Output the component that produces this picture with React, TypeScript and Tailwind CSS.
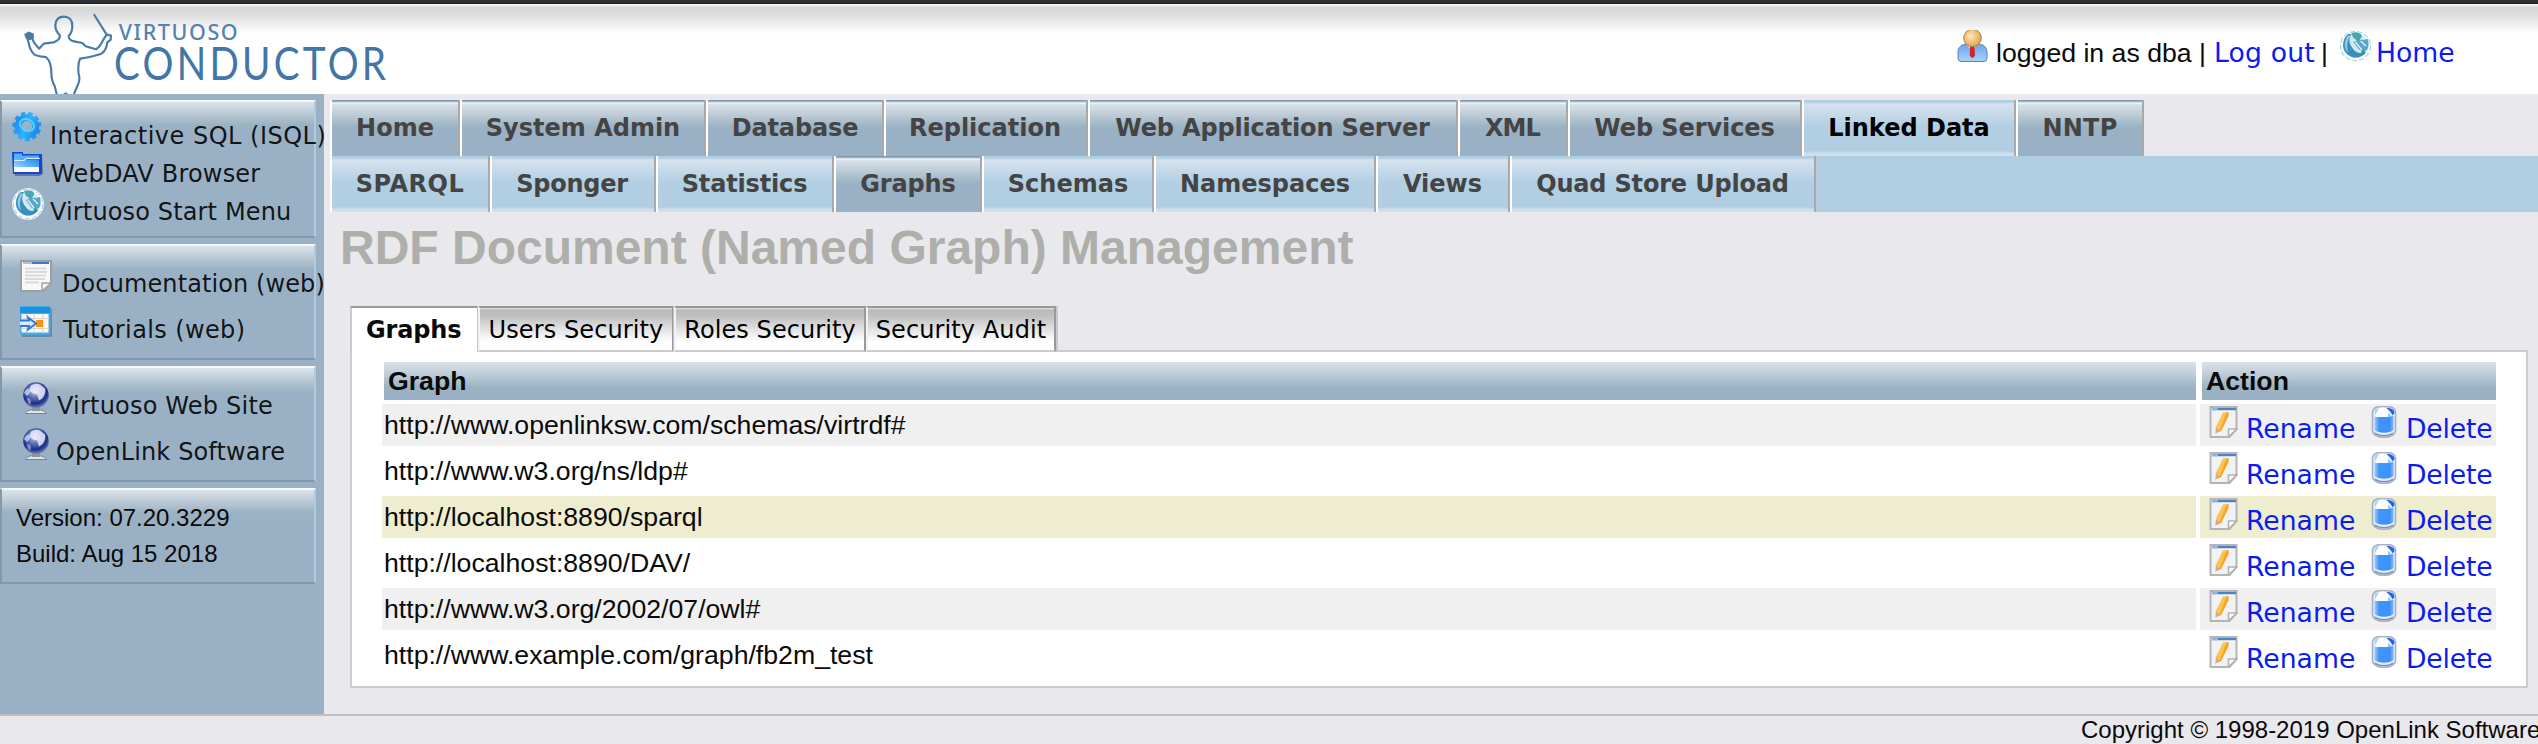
import type { ReactNode } from "react";

const verdana = "font-['DejaVu_Sans',sans-serif]";
const arial = "font-['Liberation_Sans',sans-serif]";

function Logo() {
  return (
    <svg className="block h-[94px] w-[420px] shrink-0" viewBox="0 0 1260 282" fill="none">
      <g stroke="#4a7aa8" strokeWidth="6.5" strokeLinejoin="round" strokeLinecap="round">
        <path d="M92 108 C100 116 97 122 104 130 L117 146 L131 131 L160 127 C172 124 180 116 180 106 C170 98 166 90 166 76 C167 58 178 50 192 50 C207 50 217 60 217 78 C217 92 214 100 206 108 C206 118 213 122 222 124 L247 129 L257 139 L288 148 C300 142 306 126 312 116 L320 104 L283 45" />
        <path d="M320 104 L333 107 L332 119 L322 127 C320 142 316 154 304 161 C286 168 262 172 240 176 C235 188 234 208 236 222 C242 240 236 250 232 258 L222 282" />
        <path d="M79 106 L86 128 C88 142 94 156 104 164 C114 170 128 170 138 171 C152 184 153 200 154 218 C154 234 158 248 164 258 L170 282" />
        <path d="M76 104 L86 98 L98 103 L99 112 L90 117 L80 113 Z" fill="#4a7aa8" />
        <path d="M192 282 L197 279 L202 282" strokeWidth="4" />
      </g>
      <text x="356" y="121" textLength="362" lengthAdjust="spacingAndGlyphs" letterSpacing="5" fontSize="67" fontWeight="500" fontFamily="'Noto Sans', sans-serif" fill="#5583ae">VIRTUOSO</text>
      <text x="342" y="241" textLength="826" lengthAdjust="spacingAndGlyphs" letterSpacing="12" fontSize="142" fontFamily="Lato, sans-serif" fill="#4176a6">CONDUCTOR</text>
    </svg>
  );
}

function GearIcon() {
  return (
    <svg className="h-8 w-8" viewBox="0 0 32 32" fill="none">
      <defs>
        <linearGradient id="gear" x1="0" y1="0" x2="1" y2="1">
          <stop offset="0" stopColor="#1d8cf0" />
          <stop offset=".5" stopColor="#2fb4ff" />
          <stop offset="1" stopColor="#1a86e6" />
        </linearGradient>
      </defs>
      <ellipse cx="15" cy="14.5" rx="12.7" ry="13" stroke="url(#gear)" strokeWidth="3.4" strokeDasharray="4.3 3.05" transform="rotate(-20 15 15)" />
      <ellipse cx="15" cy="14.5" rx="8.8" ry="8.8" stroke="url(#gear)" strokeWidth="7" transform="rotate(-20 15 15)" />
      <ellipse cx="15" cy="13" rx="7.4" ry="5.6" stroke="#5cd0fb" strokeWidth="1.8" transform="rotate(25 15 13)" />
    </svg>
  );
}

function FolderIcon() {
  return (
    <svg className="h-8 w-8" viewBox="0 0 32 32">
      <defs>
        <linearGradient id="folder" x1="0" y1="1" x2="1" y2="0">
          <stop offset="0" stopColor="#dff2ff" />
          <stop offset=".35" stopColor="#7cc4fb" />
          <stop offset="1" stopColor="#1e86ee" />
        </linearGradient>
      </defs>
      <path d="M2 7h28l1 19-3 2H3z" fill="#3c4f86" opacity=".6" />
      <path d="M0 4h11v2h19v19l-1 1H1z" fill="#1646d2" />
      <path d="M2 5.500h8v2h17v4H2z" fill="#4fb0f7" />
      <path d="M2 10h9l2 2h14v12H2z" fill="url(#folder)" />
      <path d="M2 19h25v5H2z" fill="#fff" />
      <path d="M2 12.500h10l2-2h14" stroke="#d6edff" strokeWidth="1.200" fill="none" />
    </svg>
  );
}

function SwirlGlobe({ className }: { className: string }) {
  return (
    <svg className={className} viewBox="0 0 32 32" preserveAspectRatio="none">
      <circle cx="16" cy="16" r="15.8" fill="#fff" />
      <circle cx="16" cy="15.5" r="12.5" fill="#cfe8f1" />
      <circle cx="16" cy="16" r="14.6" fill="none" stroke="#a9d5e6" strokeWidth="1.200" strokeDasharray="5 2" />
      <path d="M9 4C4 8 3 15 5 20c3 6 9 9 15 7 3-1 5-3 6-5-6 2-10 1-13-4C10 14 9 9 12 4z" fill="#3a8fbd" />
      <path d="M9 5c-4 6-5 12 0 18-2-7-1-12 2-17z" fill="#8fcbe3" />
      <path d="M12 3c5-2 9 0 11 3-2 2-3 3-3 5-2 1-3 0-4-2-2 0-3-3-4-6z" fill="#43aab0" />
      <path d="M14 12l6-2 8-1c1 5 1 8-1 11-3 2-6 1-8-1z" fill="#58a6cc" />
      <path d="M16 12l6 8M22 5l3 5M21 11l5 5" stroke="#e2f3f9" strokeWidth="1.300" />
      <circle cx="23.500" cy="22.500" r="2" fill="#2b9c9a" />
    </svg>
  );
}

function DocumentIcon() {
  return (
    <svg className="h-8 w-8" viewBox="0 0 32 32">
      <path d="M1 1h30v23l-8 7H1z" fill="#f8f8f8" stroke="#9c9fa1" strokeWidth="2" />
      <path d="M3 2h26v2H3z" fill="#3f76c8" />
      <path d="M3 2h9v2H3z" fill="#a9c3e8" />
      <path d="M5 8.500h21M5 12h22M5 15.500h21M5 19h20M5 22.500h14" stroke="#d8d9da" strokeWidth="2" />
      <path d="M22 31v-8h9z" fill="#f7f7f7" stroke="#a1a4a6" strokeWidth="1.500" />
    </svg>
  );
}

function TutorialIcon() {
  return (
    <svg className="h-8 w-8" viewBox="0 0 32 32">
      <rect x="1.500" y="2" width="30.500" height="29" rx="1.500" fill="#4d7a9c" opacity=".7" />
      <rect x="0" y="0" width="30.500" height="29" rx="1.500" fill="#49a9e6" />
      <path d="M0 1h30v6H0z" fill="#1b90de" />
      <path d="M1.500 8h27v18.500h-27z" fill="#fbf7f2" />
      <path d="M1 12.500h28M1 22.500h28M7 8v19M14 8v19M23 8v19" stroke="#dcd3cd" strokeWidth="1" />
      <rect x="16" y="14" width="7" height="7" fill="#f79418" />
      <path d="M0 14.500h9l-1-3 8 6-8 6 1-3.500H0" fill="#dcebfc" stroke="#2b7ce0" strokeWidth="2" />
    </svg>
  );
}

function StandGlobe() {
  return (
    <svg className="h-8 w-[28px]" viewBox="0 0 28 32">
      <defs>
        <radialGradient id="ball" cx=".45" cy=".35" r=".65">
          <stop offset="0" stopColor="#c3cbea" />
          <stop offset=".4" stopColor="#5f70b6" />
          <stop offset=".75" stopColor="#1c2e88" />
          <stop offset="1" stopColor="#7380b6" />
        </radialGradient>
      </defs>
      <path d="M3.500 31.500c1-3 5-4 10-4s9.500 1 11 4z" fill="#e3e4e8" stroke="#76808e" strokeWidth="1" />
      <path d="M10 25h8v4h-8z" fill="#8d93a3" />
      <circle cx="14" cy="13" r="12.800" fill="url(#ball)" />
      <path d="M9 3.500c3-2 7-2 9-1l5 4c1 4-1 8-3 10l-3 2-2-6-4-1-4-3z" fill="#f1f3fc" opacity=".8" />
      <path d="M2 11c1-3 3-4 5-5l1 5-3 3z" fill="#dfe4f6" opacity=".7" />
      <path d="M5 16c3 0 4 2 4 4l-1 3c-2-2-3-4-3-7z" fill="#d6dcf2" opacity=".5" />
    </svg>
  );
}

function UserIcon() {
  return (
    <svg className="h-8 w-[31px]" viewBox="0 0 31 32">
      <defs>
        <radialGradient id="face" cx=".4" cy=".4" r=".65">
          <stop offset="0" stopColor="#ffe7bb" />
          <stop offset="1" stopColor="#dda347" />
        </radialGradient>
        <linearGradient id="shirt" x1="0" y1="0" x2="0" y2="1">
          <stop offset="0" stopColor="#6aa3ee" />
          <stop offset="1" stopColor="#a9d3ff" />
        </linearGradient>
      </defs>
      <path d="M1 28v-6c0-5 4-8 9-8h11c5 0 9 3 9 8v6q0 3.500-3 3.500H4Q1 31.500 1 28z" fill="url(#shirt)" stroke="#5b83ba" strokeWidth="1" />
      <path d="M10 15l5 6 5-6z" fill="#fff" />
      <path d="M13 16h4.500l.5 10-2.500 2-2.700-2z" fill="#cf2433" />
      <circle cx="15.500" cy="8" r="8.800" fill="url(#face)" stroke="#a97d3a" strokeWidth="1" />
    </svg>
  );
}

function RenameIcon() {
  return (
    <svg className="h-8 w-[29px]" viewBox="0 0 29 32">
      <path d="M1.500 1h26v22l-7 8H1.500z" fill="#f1f2f3" stroke="#b2b4b6" strokeWidth="2" />
      <path d="M3 2h24v2.200H3z" fill="#4a81c9" />
      <path d="M3 2h6v2.200H3z" fill="#93b3de" />
      <path d="M14 6.500l5-.5.500 4-7.500 15-5.500 2.500.5-7z" fill="#fbc352" />
      <path d="M17.500 6.500l2-.5v4L12 25l-2 1z" fill="#f5a52a" />
      <path d="M7 21.500l4.500 3.500-5 2.500z" fill="#d7a98a" />
      <path d="M19.500 31v-8h8z" fill="#fff" stroke="#b0b2b4" strokeWidth="1.600" />
    </svg>
  );
}

function DeleteIcon() {
  return (
    <svg className="h-8 w-[26px]" viewBox="0 0 26 32">
      <defs>
        <linearGradient id="bin" x1="0" y1="0" x2="1" y2="0">
          <stop offset="0" stopColor="#9fcbf8" />
          <stop offset=".25" stopColor="#3f95fa" />
          <stop offset=".8" stopColor="#3b92fb" />
          <stop offset="1" stopColor="#86b7ee" />
        </linearGradient>
      </defs>
      <path d="M1.500 6C2 2 6 .8 9 .8h8c4 0 7 2 7.500 5.200v19c-1 5-6 6.200-11.500 6.200S2.500 30 1.500 25z" fill="#e6eefa" stroke="#a4afc3" strokeWidth="1.600" />
      <path d="M3.500 10h19v14c-4 3.500-15 3.500-19 0z" fill="url(#bin)" />
      <path d="M3.500 5C4 3 6 2 8 2L4 9z" fill="#a8d0f6" />
      <path d="M8 2c4-1 9 0 9 1l1 8H4z" fill="#fcfdff" />
      <path d="M15.500 2c5 0 8 1.500 8 5l-2 2.500c-1-3-3-4.500-6-7.500z" fill="#1d62f0" />
      <path d="M17 7l4 4h-4z" fill="#8fc2fd" />
      <path d="M4 27c4 3.500 14 3.500 18 0" stroke="#7f8da9" strokeWidth="1.200" fill="none" />
    </svg>
  );
}

function Box({ className, children }: { className: string; children: ReactNode }) {
  return (
    <div className={`w-[316px] shrink-0 border-2 border-t-[#f6f8fa] border-r-[#aecbe2] border-b-[#8398aa] border-l-[#8398aa] bg-[linear-gradient(#dbe4eb_0px,#bfccd8_10px,#9bb2c3_23px,#9ab1c5_30px)] ${className}`}>
      {children}
    </div>
  );
}

function SideLink({ icon, label, row, slot, track }: { icon: ReactNode; label: string; row: string; slot: string; track: string }) {
  return (
    <div className={`flex items-start ${row}`}>
      <span className={`shrink-0 ${slot}`}>{icon}</span>
      <span className={`whitespace-nowrap text-2xl/[inherit] text-black/90 ${track}`}>{label}</span>
    </div>
  );
}

const darkTab = "bg-[linear-gradient(#809bb0_0px,#809bb0_1px,#bccad6_2px,#f1f5f8_3px,#d6dfe7_5px,#bdcbd6_15px,#9bb3c4_27px,#9ab0c4_32px)] text-[#444]";
const lightTab = "bg-[linear-gradient(#b1cee3_0px,#b1cee3_2px,#d5e3ef_4px,#c7daea_14px,#b2cfe4_26px,#b0cde2_51px,#c1d7e7_52px,#d0e0ec_54px)] text-[#444]";
const activeTop = "bg-[linear-gradient(#b1cee3_0px,#b1cee3_2px,#d5e3ef_4px,#c7daea_14px,#b2cfe4_26px,#b0cde2_51px,#c1d7e7_52px,#d0e0ec_54px)] text-black";

const mainTabs = [
  ["Home", "w-[130px]", darkTab],
  ["System Admin", "w-[246px]", darkTab],
  ["Database", "w-[178px] tracking-[-0.15px]", darkTab],
  ["Replication", "w-[204px] pr-[2px]", darkTab],
  ["Web Application Server", "w-[370px] pr-px tracking-[-0.16px]", darkTab],
  ["XML", "w-[110px] pr-px tracking-[-0.9px]", darkTab],
  ["Web Services", "w-[234px] pr-px tracking-[-0.1px]", darkTab],
  ["Linked Data", "w-[214px]", activeTop],
  ["NNTP", "w-[128px] tracking-[0.2px]", darkTab],
];

const subTabs = [
  ["SPARQL", "w-[160px] tracking-[0.5px]", lightTab],
  ["Sponger", "w-[166px] pr-[2px] tracking-[-0.25px]", lightTab],
  ["Statistics", "w-[178px] pr-px tracking-[-0.15px]", lightTab],
  ["Graphs", "w-[148px] tracking-[-0.15px]", darkTab],
  ["Schemas", "w-[172px]", lightTab],
  ["Namespaces", "w-[222px]", lightTab],
  ["Views", "w-[134px] pr-px", lightTab],
  ["Quad Store Upload", "w-[306px] pr-px tracking-[-0.18px]", lightTab],
];

function TabRow({ tabs, className }: { tabs: string[][]; className?: string }) {
  return (
    <div className={`flex h-14 ${className ?? ""}`}>
      {tabs.map(([label, width, skin]) => (
        <div key={label} className={`flex shrink-0 justify-center border-r-2 border-l-2 border-r-[#a9a9a9] border-l-white bg-origin-border text-2xl/[57px] font-bold whitespace-nowrap ${verdana} ${width} ${skin}`}>
          {label}
        </div>
      ))}
    </div>
  );
}

const pageTabs = [
  ["Users Security", "w-[196px] tracking-[0.1px]"],
  ["Roles Security", "w-[192px] tracking-[0.08px]"],
  ["Security Audit", "w-[190px] tracking-[0.1px]"],
];

const graphs = [
  ["http://www.openlinksw.com/schemas/virtrdf#", "bg-[#f0f0f0]"],
  ["http://www.w3.org/ns/ldp#", ""],
  ["http://localhost:8890/sparql", "bg-[#eeedd0]"],
  ["http://localhost:8890/DAV/", ""],
  ["http://www.w3.org/2002/07/owl#", "bg-[#f0f0f0]"],
  ["http://www.example.com/graph/fb2m_test", ""],
];

const headCell = "h-[38px] bg-[linear-gradient(#dbe3ea,#c0ced9_30%,#9bb2c2_68%,#9ab0c5)] text-[26.67px]/[38px] font-bold";

export default function App() {
  return (
    <div className={`flex h-[744px] w-[2538px] flex-col overflow-hidden bg-[#e9e8ed] text-[#0a0a0a] ${arial}`}>
      <header className="flex h-[94px] shrink-0 justify-between bg-[linear-gradient(#2c3035_0px,#2c3035_3px,#1f2327_3px,#1f2327_4px,#f6f6f6_4px,#ececec_6px,#d6d6d6_7px,#dcdcdc_14px,#f2f2f2_26px,#fff_34px)]">
        <Logo />
        <div className="flex w-[581px] text-[26.67px] leading-[46px]">
          <span className="mt-[30px] w-[39px]"><UserIcon /></span>
          <span className="mt-[30px] w-[218px] whitespace-nowrap">logged in as dba |</span>
          <a className={`mt-[30px] w-[107px] tracking-[0.15px] whitespace-nowrap text-[#0a1cf0] ${verdana}`}>Log out</a>
          <span className="mt-[30px] w-[18px]">|</span>
          <SwirlGlobe className="mt-[30px] h-8 w-[33px]" />
          <a className={`mt-[30px] ml-[4px] whitespace-nowrap text-[#0a1cf0] ${verdana}`}>Home</a>
        </div>
      </header>

      <div className="flex h-[620px] shrink-0">
        <aside className={`flex w-[324px] shrink-0 flex-col gap-[6px] bg-[#9ab0c4] pt-[6px] ${verdana}`}>
          <Box className="h-[138px] pt-[15px] pl-[10px]">
            <SideLink icon={<GearIcon />} label="Interactive SQL (ISQL)" row="h-[38px] leading-[38px]" slot="-mt-[5px] w-[38px]" track="tracking-[0.5px]" />
            <SideLink icon={<FolderIcon />} label="WebDAV Browser" row="h-[38px] leading-[38px]" slot="-mt-[7px] w-[39px]" track="tracking-[0.2px]" />
            <SideLink icon={<SwirlGlobe className="h-8 w-8" />} label="Virtuoso Start Menu" row="h-[38px] leading-[38px]" slot="-mt-[5px] w-[38px]" track="tracking-[0.14px]" />
          </Box>
          <Box className="h-[116px] pt-[14px] pl-[18px]">
            <SideLink icon={<DocumentIcon />} label="Documentation (web)" row="h-[46px] leading-[48px]" slot="w-[42px]" track="tracking-[0.1px]" />
            <SideLink icon={<TutorialIcon />} label="Tutorials (web)" row="h-[46px] leading-[48px]" slot="w-[43px]" track="tracking-[0.38px]" />
          </Box>
          <Box className="h-[116px] pt-[14px] pl-5">
            <SideLink icon={<StandGlobe />} label="Virtuoso Web Site" row="h-[46px] leading-[48px]" slot="w-[35px]" track="tracking-[0.2px]" />
            <SideLink icon={<StandGlobe />} label="OpenLink Software" row="h-[46px] leading-[48px]" slot="w-[34px]" track="tracking-[0.14px]" />
          </Box>
          <Box className={`h-[96px] pt-[10px] pl-[14px] text-2xl/[36px] ${arial}`}>
            <div>Version: 07.20.3229</div>
            <div>Build: Aug 15 2018</div>
          </Box>
        </aside>

        <main className="flex w-[2214px] flex-col pt-[6px] pl-[6px]">
          <TabRow tabs={mainTabs} />
          <TabRow tabs={subTabs} className="bg-[#b0cde2]" />
          <h1 className="mt-2 h-14 pl-[10px] text-5xl/[56px] font-bold text-[#aeafaa]">RDF Document (Named Graph) Management</h1>
          <div className="relative z-10 mt-[30px] ml-5 flex h-[46px] text-2xl/[44px]">
            <div className={`w-[128px] border-t-2 border-l-2 border-t-[#999] border-l-[#c9c9c9] bg-white pl-[14px] font-bold tracking-[-0.15px] ${verdana}`}>Graphs</div>
            {pageTabs.map(([label, width]) => (
              <div key={label} className={`flex justify-center border-t-2 border-r-2 border-b-2 border-l-2 border-t-[#999] border-r-[#999] border-b-[#ccc] border-l-[#f2f2f2] bg-[linear-gradient(#e4e4e4_0px,#bababa_2px,#bebebe_7px,#e4e4e4_22px,#fff_34px)] whitespace-nowrap text-black shadow-[-1px_0_0_#c4c4c4] last:shadow-[2px_0_0_#c9c9c9] ${verdana} ${width}`}>{label}</div>
            ))}
          </div>
          <section className="-mt-[2px] ml-5 h-[338px] w-[2178px] border-2 border-[#ccc] bg-white pt-[10px] pl-[30px]">
            <div className="ml-[2px] flex gap-[6px]">
              <div className={`w-[1812px] pl-1 ${headCell}`}>Graph</div>
              <div className={`w-[294px] pl-1 ${headCell}`}>Action</div>
            </div>
            <div className="mt-1 flex flex-col gap-1">
              {graphs.map(([url, tint]) => (
                <div key={url} className="flex gap-1 text-[26.67px]/[42px]">
                  <div className={`h-[42px] w-[1814px] pl-[2px] ${tint}`}>{url}</div>
                  <div className={`flex h-[42px] w-[296px] pt-[2px] pl-[9px] leading-[46px] text-[#0a1cf0] ${verdana} ${tint}`}>
                    <RenameIcon />
                    <a className="ml-[8px] w-[125px]">Rename</a>
                    <DeleteIcon />
                    <a className="ml-[9px] tracking-[-0.2px]">Delete</a>
                  </div>
                </div>
              ))}
            </div>
          </section>
        </main>
      </div>

      <footer className="flex h-[30px] shrink-0 border-t-2 border-[#bfbfbf] pl-[2081px] text-2xl/[28px] whitespace-nowrap">
        Copyright © 1998-2019 OpenLink Software
      </footer>
    </div>
  );
}
